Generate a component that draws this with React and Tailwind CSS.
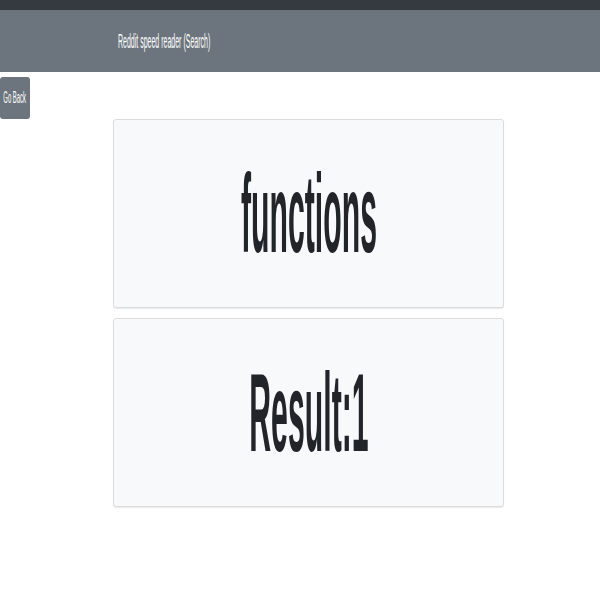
import React from 'react';

const Card = ({ children }) => (
    <div className="h-[189px] w-[391px] flex items-center justify-center overflow-hidden rounded-[3px] border border-[#dcdcdc] bg-[#f8f9fa] shadow-[0_1px_1px_rgba(0,0,0,0.08)]">
        <span className="inline-block whitespace-nowrap text-[112px] font-bold leading-none text-[#212529] scale-x-[0.27]">
            {children}
        </span>
    </div>
);

const App = () => {
    return (
        <div className="min-h-screen bg-white font-['Liberation_Sans',Arial,sans-serif]">
            <div className="h-[10px] bg-[#343a40]"></div>

            {/* header */}
            <div className="h-[62px] flex items-center pl-[118px] bg-[#6c757d]">
                <span className="inline-block whitespace-nowrap origin-left text-[20px] leading-none text-white scale-x-[0.35]">
                    Reddit speed reader (Search)
                </span>
            </div>

            <div className="pt-[5px]">
                <button className="h-[42px] w-[30px] flex items-center justify-center overflow-hidden rounded-[3px] bg-[#6c757d] text-white">
                    <span className="inline-block whitespace-nowrap text-[16px] leading-none scale-x-[0.37]">
                        Go Back
                    </span>
                </button>
            </div>

            <div className="ml-[113px] flex flex-col gap-[10px]">
                <Card>functions</Card>
                <Card>Result:1</Card>
            </div>
        </div>
    );
};

export default App;
